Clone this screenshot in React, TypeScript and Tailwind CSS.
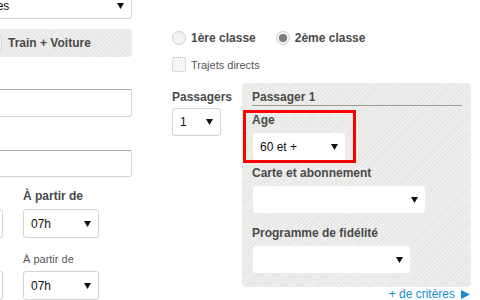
import React from 'react';

const stripes =
    'bg-[repeating-linear-gradient(-45deg,#e5e5e3_0px,#e5e5e3_1px,#eeeeec_1px,#eeeeec_3px)]';

function Arrow() {
    return (
        <svg width="7" height="6" viewBox="0 0 7 6" className="shrink-0">
            <path d="M0 0H7L3.5 6Z" fill="#111" />
        </svg>
    );
}

function Select({ value, className }: { value?: string; className: string }) {
    return (
        <div
            className={`flex items-center justify-between bg-white border border-[#d4d4d4] rounded-[3px] pl-[7px] pr-[7px] text-[12px] text-[#111] ${className}`}
        >
            <span>{value}</span>
            <Arrow />
        </div>
    );
}

function PanelSelect({ value, className }: { value?: string; className: string }) {
    return (
        <div
            className={`flex items-center justify-between bg-white rounded-[3px] pl-[7px] pr-[7px] text-[12px] text-[#111] ${className}`}
        >
            <span>{value}</span>
            <Arrow />
        </div>
    );
}

function Radio({ checked, label }: { checked?: boolean; label: string }) {
    return (
        <div className="flex items-center gap-[5px]">
            <div className="w-[14px] h-[14px] rounded-full border border-[#cfcfcf] bg-[#f3f3f3] flex items-center justify-center">
                {checked && <div className="w-[8px] h-[8px] rounded-full bg-[#7a7a7a]" />}
            </div>
            <span className="text-[12px] font-bold text-[#4a4a4a] leading-[14px]">{label}</span>
        </div>
    );
}

export default function App() {
    return (
        <div
            className="w-[480px] h-[300px] overflow-hidden bg-white flex"
            style={{ fontFamily: '"Liberation Sans", Arial, sans-serif' }}
        >
            {/* colonne gauche (coupée) */}
            <div className="ml-[-40px] w-[172px] shrink-0 flex flex-col">
                <Select value="Toutes" className="mt-[-7px] h-[28px] pl-[13px]" />

                <div className={`mt-[10px] h-[30px] rounded-[4px] ${stripes} flex items-center pl-[28px] gap-[6px]`}>
                    <div className="w-[14px] h-[14px] rounded-[2px] border border-[#cfcfcf] bg-[#f6f6f6]" />
                    <span className="text-[12px] font-bold text-[#4a4a4a]">Train + Voiture</span>
                </div>

                <div className="mt-[32px] h-[29px] bg-white border border-[#d4d4d4] border-t-[#a8a8a8] rounded-[3px]" />
                <div className="mt-[33px] h-[29px] bg-white border border-[#d4d4d4] border-t-[#a8a8a8] rounded-[3px]" />

                <div className="flex gap-[20px] mt-[12px]">
                    <div className="w-[43px] flex flex-col">
                        <div className="h-[14px]" />
                        <div className="mt-[6px] h-[29px] bg-white border border-[#d4d4d4] rounded-[3px]" />
                        <div className="mt-[14px] h-[14px]" />
                        <div className="mt-[5px] h-[29px] bg-white border border-[#d4d4d4] rounded-[3px]" />
                    </div>
                    <div className="w-[76px] flex flex-col">
                        <span className="text-[12px] font-bold text-[#4a4a4a] leading-[14px]">À partir de</span>
                        <Select value="07h" className="mt-[6px] h-[29px]" />
                        <span className="mt-[14px] text-[11px] text-[#555] leading-[14px]">À partir de</span>
                        <Select value="07h" className="mt-[5px] h-[29px]" />
                    </div>
                </div>
            </div>

            {/* colonne droite */}
            <div className="ml-[40px] w-[299px] flex flex-col">
                <div className="mt-[31px] flex items-center gap-[20px]">
                    <Radio label="1ère classe" />
                    <Radio checked label="2ème classe" />
                </div>

                <div className="mt-[12px] flex items-center gap-[5px]">
                    <div className="w-[14px] h-[15px] rounded-[2px] border border-dotted border-[#bdbdbd] bg-[#f6f6f6]" />
                    <span className="text-[11px] text-[#555] leading-[14px]">Trajets directs</span>
                </div>

                <div className="mt-[11px] flex gap-[11px]">
                    <div className="w-[59px] flex flex-col">
                        <span className="mt-[7px] text-[12px] font-bold text-[#4a4a4a] leading-[14px]">Passagers</span>
                        <Select value="1" className="mt-[4px] w-[49px] h-[28px]" />
                    </div>

                    <div className="flex flex-col">
                        <div className={`w-[229px] h-[204px] rounded-[4px] ${stripes} pl-[10px] pr-[9px] flex flex-col`}>
                            <div className="mt-[7px] pb-[1px] border-b border-[#9a9a9a] text-[12px] font-bold text-[#4a4a4a] leading-[14px]">
                                Passager 1
                            </div>

                            <div className="mt-[4px] ml-[-9px] w-[113px] border-[3px] border-[#f00] pl-[6px] flex flex-col">
                                <span className="text-[12px] font-bold text-[#4a4a4a] leading-[14px]">Age</span>
                                <PanelSelect value="60 et +" className="mt-[6px] ml-[1px] w-[92px] h-[27px]" />
                            </div>

                            <span className="mt-[3px] text-[12px] font-bold text-[#4a4a4a] leading-[14px]">Carte et abonnement</span>
                            <PanelSelect className="mt-[6px] ml-[1px] w-[172px] h-[27px]" />

                            <span className="mt-[13px] text-[12px] font-bold text-[#4a4a4a] leading-[14px]">Programme de fidélité</span>
                            <PanelSelect className="mt-[6px] ml-[1px] w-[157px] h-[27px]" />
                        </div>

                        <div className="mt-[1px] flex items-center justify-end gap-[6px] pr-[1px] text-[12px] leading-[12px] text-[#1a8ad0]">
                            <span>+ de critères</span>
                            <svg width="9" height="9" viewBox="0 0 9 9">
                                <path d="M0 0L9 4.5L0 9Z" fill="#1a8ad0" />
                            </svg>
                        </div>
                    </div>
                </div>
            </div>
        </div>
    );
}
